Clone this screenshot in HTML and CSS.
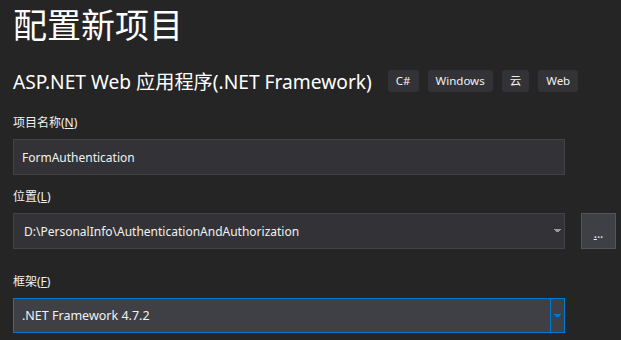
FILE: index.html
```html
<!DOCTYPE html>
<html lang="zh-CN">
<head>
    <meta charset="UTF-8">
    <title>配置新项目</title>
    <link rel="stylesheet" href="styles.css">
</head>
<body>
    <div class="page">
        <h1 class="page-title">配置新项目</h1>

        <div class="template-row">
            <h2 class="template-name">ASP.NET Web 应用程序(.NET Framework)</h2>
            <div class="tags">
                <span class="tag">C#</span>
                <span class="tag">Windows</span>
                <span class="tag">云</span>
                <span class="tag">Web</span>
            </div>
        </div>

        <div class="field field-first">
            <label class="field-label" for="projectName">项目名称(<u>N</u>)</label>
            <div class="field-row">
                <input class="text-input" id="projectName" type="text" value="FormAuthentication">
            </div>
        </div>

        <div class="field">
            <label class="field-label" for="location">位置(<u>L</u>)</label>
            <div class="field-row">
                <div class="combo">
                    <span class="combo-value">D:\PersonalInfo\AuthenticationAndAuthorization</span>
                    <span class="combo-arrow">
                        <svg width="7" height="4" viewBox="0 0 7 4"><path d="M0 0h7v1h-1v1h-1v1h-3v-1h-1v-1h-1z" fill="#999999"/></svg>
                    </span>
                </div>
                <button class="browse-btn" type="button"><u>.</u>..</button>
            </div>
        </div>

        <div class="field field-spaced">
            <label class="field-label" for="framework">框架(<u>F</u>)</label>
            <div class="field-row">
                <div class="combo combo-focused" id="framework">
                    <span class="combo-value">.NET Framework 4.7.2</span>
                    <span class="combo-arrow">
                        <svg width="7" height="4" viewBox="0 0 7 4"><path d="M0 0h7v1h-1v1h-1v1h-3v-1h-1v-1h-1z" fill="#007acc"/></svg>
                    </span>
                </div>
            </div>
        </div>
    </div>
</body>
</html>
```

FILE: styles.css
```css
:root {
    --bg: #252526;
    --input-bg: #333337;
    --input-border: #434346;
    --focus-bg: #3f3f46;
    --accent: #007acc;
    --text: #f1f1f1;
    --tag-bg: #333337;
}

* {
    margin: 0;
    padding: 0;
    box-sizing: border-box;
}

body {
    background: var(--bg);
    color: var(--text);
    font-family: "Noto Sans", "Noto Sans CJK SC", sans-serif;
    overflow: hidden;
}

.page {
    padding: 0 0 0 13px;
}

.page-title {
    font-family: "Noto Sans CJK SC", sans-serif;
    font-size: 34px;
    font-weight: 400;
    line-height: 48px;
    color: #ffffff;
}

.template-row {
    display: flex;
    align-items: center;
    margin-top: 21px;
    height: 24px;
}

.template-name {
    font-size: 19.2px;
    font-weight: 400;
    color: #ffffff;
    white-space: nowrap;
}

.tags {
    display: flex;
    gap: 9px;
    margin-left: 16px;
}

.tag {
    height: 22px;
    line-height: 22px;
    padding: 0 8px;
    background: var(--tag-bg);
    border-radius: 3px;
    font-size: 11.5px;
}

.field {
    display: flex;
    flex-direction: column;
}

.field-label {
    font-size: 12px;
    line-height: 16px;
    margin-top: 14px;
    margin-bottom: 8px;
}

.field-first .field-label {
    margin-top: 22px;
}

.field-spaced .field-label {
    margin-top: 25px;
}

.field-row {
    display: flex;
    gap: 16px;
}

.text-input {
    flex-shrink: 0;
    width: 552px;
    height: 36px;
    padding: 0 8px;
    background: var(--input-bg);
    border: 1px solid var(--input-border);
    color: var(--text);
    font-family: inherit;
    font-size: 12px;
    outline: none;
}

.combo {
    flex-shrink: 0;
    width: 552px;
    height: 36px;
    display: flex;
    align-items: stretch;
    background: var(--input-bg);
    border: 1px solid var(--input-border);
    font-size: 12px;
}

.combo-value {
    flex: 1;
    display: flex;
    align-items: center;
    padding-left: 10px;
}

.combo-arrow {
    width: 14px;
    display: flex;
    align-items: center;
    justify-content: center;
}

.combo-focused {
    height: 35px;
    background: var(--focus-bg);
    border-color: var(--accent);
}

.combo-focused .combo-value {
    padding-left: 8px;
    font-size: 12.5px;
}

.combo-focused .combo-arrow {
    border-left: 1px solid var(--accent);
}

.browse-btn {
    flex-shrink: 0;
    width: 35px;
    height: 36px;
    background: var(--focus-bg);
    border: 1px solid #555558;
    color: var(--text);
    font-family: inherit;
    font-size: 12px;
    padding-top: 4px;
}
```
